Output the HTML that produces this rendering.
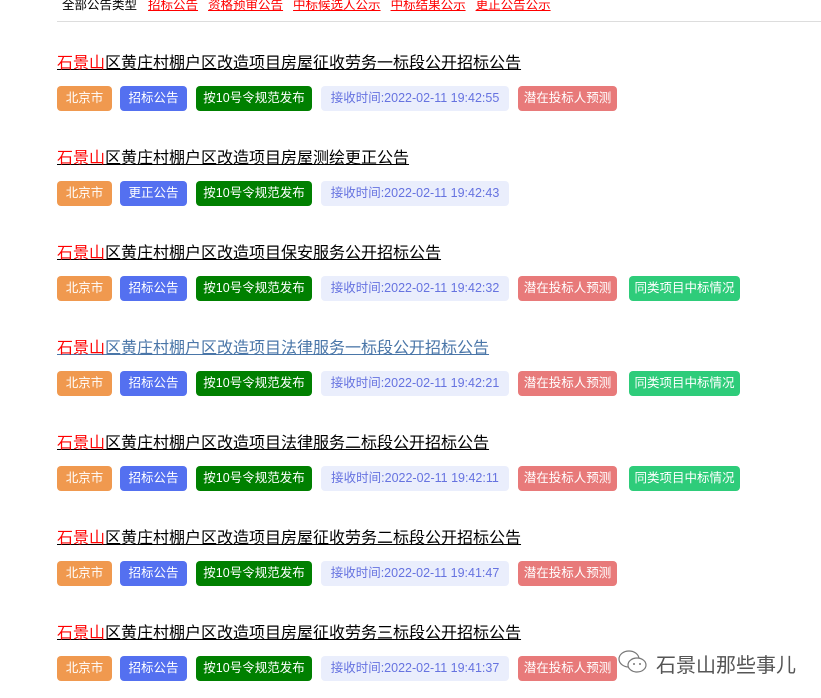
<!DOCTYPE html>
<html><head><meta charset="utf-8"><style>
body{margin:0;width:821px;height:698px;overflow:hidden;background:#fff;font-family:"Liberation Sans","Noto Sans CJK SC",sans-serif;position:relative}
.hdr{position:absolute;left:62px;top:-6px;font-size:12.5px;white-space:nowrap}
.hdr span{margin-right:11px}
.hdr a{color:#f00;text-decoration:underline;margin-right:10px}
.line{position:absolute;left:57px;right:0;top:21px;height:1px;background:#ddd}
.item{position:absolute;left:57px}
.t{font-size:16px;color:#000;text-decoration:underline;white-space:nowrap;height:22px;line-height:22px}
.t b{font-weight:normal;color:#f00}
.tags{position:absolute;top:33px;left:0;white-space:nowrap}
.g{position:absolute;top:0;height:25px;line-height:25px;border-radius:4px;color:#fff;font-size:12.5px;text-align:center}
.c1{left:0;width:55px;background:#f0994f}
.c2{left:63px;width:67px;background:#5470f0}
.c3{left:139px;width:116px;background:#008000}
.c4{left:264px;width:188px;background:#eaeefc;color:#6673e0}
.c5{left:461px;width:99px;background:#e87a7a}
.c6{left:572px;width:111px;background:#2ecc7a}
.wm{position:absolute;left:656px;top:649px;font-size:20px;color:#555;letter-spacing:0px}
</style></head><body>
<div class="hdr"><span>全部公告类型</span><a>招标公告</a><a>资格预审公告</a><a>中标候选人公示</a><a>中标结果公示</a><a>更正公告公示</a></div>
<div class="line"></div>

<div class="item" style="top:53px"><div class="t"><b>石景山</b>区黄庄村棚户区改造项目房屋征收劳务一标段公开招标公告</div><div class="tags"><div class="g c1">北京市</div><div class="g c2">招标公告</div><div class="g c3">按10号令规范发布</div><div class="g c4">接收时间:2022-02-11 19:42:55</div><div class="g c5">潜在投标人预测</div></div></div>

<div class="item" style="top:148px"><div class="t"><b>石景山</b>区黄庄村棚户区改造项目房屋测绘更正公告</div><div class="tags"><div class="g c1">北京市</div><div class="g c2">更正公告</div><div class="g c3">按10号令规范发布</div><div class="g c4">接收时间:2022-02-11 19:42:43</div></div></div>

<div class="item" style="top:243px"><div class="t"><b>石景山</b>区黄庄村棚户区改造项目保安服务公开招标公告</div><div class="tags"><div class="g c1">北京市</div><div class="g c2">招标公告</div><div class="g c3">按10号令规范发布</div><div class="g c4">接收时间:2022-02-11 19:42:32</div><div class="g c5">潜在投标人预测</div><div class="g c6">同类项目中标情况</div></div></div>

<div class="item" style="top:338px"><div class="t" style="color:#4a76a8"><b>石景山</b>区黄庄村棚户区改造项目法律服务一标段公开招标公告</div><div class="tags"><div class="g c1">北京市</div><div class="g c2">招标公告</div><div class="g c3">按10号令规范发布</div><div class="g c4">接收时间:2022-02-11 19:42:21</div><div class="g c5">潜在投标人预测</div><div class="g c6">同类项目中标情况</div></div></div>

<div class="item" style="top:433px"><div class="t"><b>石景山</b>区黄庄村棚户区改造项目法律服务二标段公开招标公告</div><div class="tags"><div class="g c1">北京市</div><div class="g c2">招标公告</div><div class="g c3">按10号令规范发布</div><div class="g c4">接收时间:2022-02-11 19:42:11</div><div class="g c5">潜在投标人预测</div><div class="g c6">同类项目中标情况</div></div></div>

<div class="item" style="top:528px"><div class="t"><b>石景山</b>区黄庄村棚户区改造项目房屋征收劳务二标段公开招标公告</div><div class="tags"><div class="g c1">北京市</div><div class="g c2">招标公告</div><div class="g c3">按10号令规范发布</div><div class="g c4">接收时间:2022-02-11 19:41:47</div><div class="g c5">潜在投标人预测</div></div></div>

<div class="item" style="top:623px"><div class="t"><b>石景山</b>区黄庄村棚户区改造项目房屋征收劳务三标段公开招标公告</div><div class="tags"><div class="g c1">北京市</div><div class="g c2">招标公告</div><div class="g c3">按10号令规范发布</div><div class="g c4">接收时间:2022-02-11 19:41:37</div><div class="g c5">潜在投标人预测</div></div></div>

<svg style="position:absolute;left:617px;top:649px" width="32" height="26" viewBox="0 0 32 26"><ellipse cx="12" cy="10" rx="10" ry="8" fill="#fff" stroke="#777" stroke-width="1.2"/><ellipse cx="20" cy="16" rx="9" ry="7" fill="#fff" stroke="#777" stroke-width="1.2"/><circle cx="17" cy="15" r="1" fill="#777"/><circle cx="23" cy="15" r="1" fill="#777"/></svg>
<div class="wm">石景山那些事儿</div>
</body></html>
